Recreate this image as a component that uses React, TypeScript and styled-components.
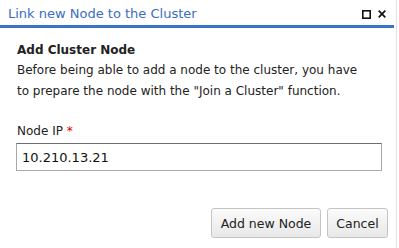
import React from "react";
import styled, { createGlobalStyle } from "styled-components";

const Global = createGlobalStyle`
  html, body { margin: 0; padding: 0; background: #fff; }
  body { font-family: "DejaVu Sans", Verdana, sans-serif; }
`;

const Dialog = styled.div`
  width: 396px;
  height: 248px;
  border-right: 1px solid #e2e2e2;
  display: flex;
  flex-direction: column;
  background: #fff;
`;

const TitleBar = styled.div`
  height: 25px;
  border-bottom: 3px solid #3a73c8;
  display: flex;
  align-items: center;
  padding: 0 8px 0 8px;
  margin-right: 2px;
`;

const Title = styled.div`
  flex: 1;
  font-size: 13px;
  color: #3c6dc2;
  padding-top: 1px;
`;

const Tools = styled.div`
  display: flex;
  align-items: center;
  gap: 7px;
  padding-top: 3px;
`;

const Body = styled.div`
  padding: 13px 0 0 17px;
  flex: 1;
  display: flex;
  flex-direction: column;
`;

const Heading = styled.div`
  font-size: 12px;
  font-weight: bold;
  color: #222;
  line-height: 19px;
`;

const Text = styled.div`
  font-size: 12px;
  color: #222;
  line-height: 21px;
`;

const Label = styled.div`
  font-size: 12px;
  color: #222;
  margin-top: 21px;
  line-height: 16px;
`;

const Req = styled.span`
  color: #e00000;
`;

const Input = styled.input`
  margin: 4px 0 0 -1px;
  box-sizing: border-box;
  width: 366px;
  height: 28px;
  border: 1px solid #a8a8a8;
  border-top-color: #6e6e6e;
  padding: 0 5px;
  font-family: "DejaVu Sans", Verdana, sans-serif;
  font-size: 13px;
  color: #111;
  outline: none;
`;

const Footer = styled.div`
  display: flex;
  justify-content: flex-end;
  gap: 6px;
  padding: 0 8px 0 0;
  margin-top: 37px;
`;

const Button = styled.button<{ $w: number }>`
  width: ${(p) => p.$w}px;
  height: 30px;
  border: 1px solid #c4c4c4;
  border-radius: 3px;
  background: linear-gradient(#fbfbfb, #e8e8e8);
  font-family: "DejaVu Sans", Verdana, sans-serif;
  font-size: 12.5px;
  color: #222;
  padding: 0;
`;

export default function App() {
  return (
    <>
      <Global />
      <Dialog>
        <TitleBar>
          <Title>Link new Node to the Cluster</Title>
          <Tools>
            <svg width="9" height="9" viewBox="0 0 9 9">
              <rect x="0.8" y="0.8" width="7.4" height="7.4" fill="none" stroke="#111" strokeWidth="1.6" />
            </svg>
            <svg width="8" height="8" viewBox="0 0 8 8">
              <path d="M0.7 0.7 L7.3 7.3 M7.3 0.7 L0.7 7.3" stroke="#111" strokeWidth="1.7" />
            </svg>
          </Tools>
        </TitleBar>
        <Body>
          <Heading>Add Cluster Node</Heading>
          <Text>
            Before being able to add a node to the cluster, you have
            <br />
            to prepare the node with the "Join a Cluster" function.
          </Text>
          <Label>
            Node IP <Req>*</Req>
          </Label>
          <Input defaultValue="10.210.13.21" />
          <Footer>
            <Button $w={110}>Add new Node</Button>
            <Button $w={61}>Cancel</Button>
          </Footer>
        </Body>
      </Dialog>
    </>
  );
}
